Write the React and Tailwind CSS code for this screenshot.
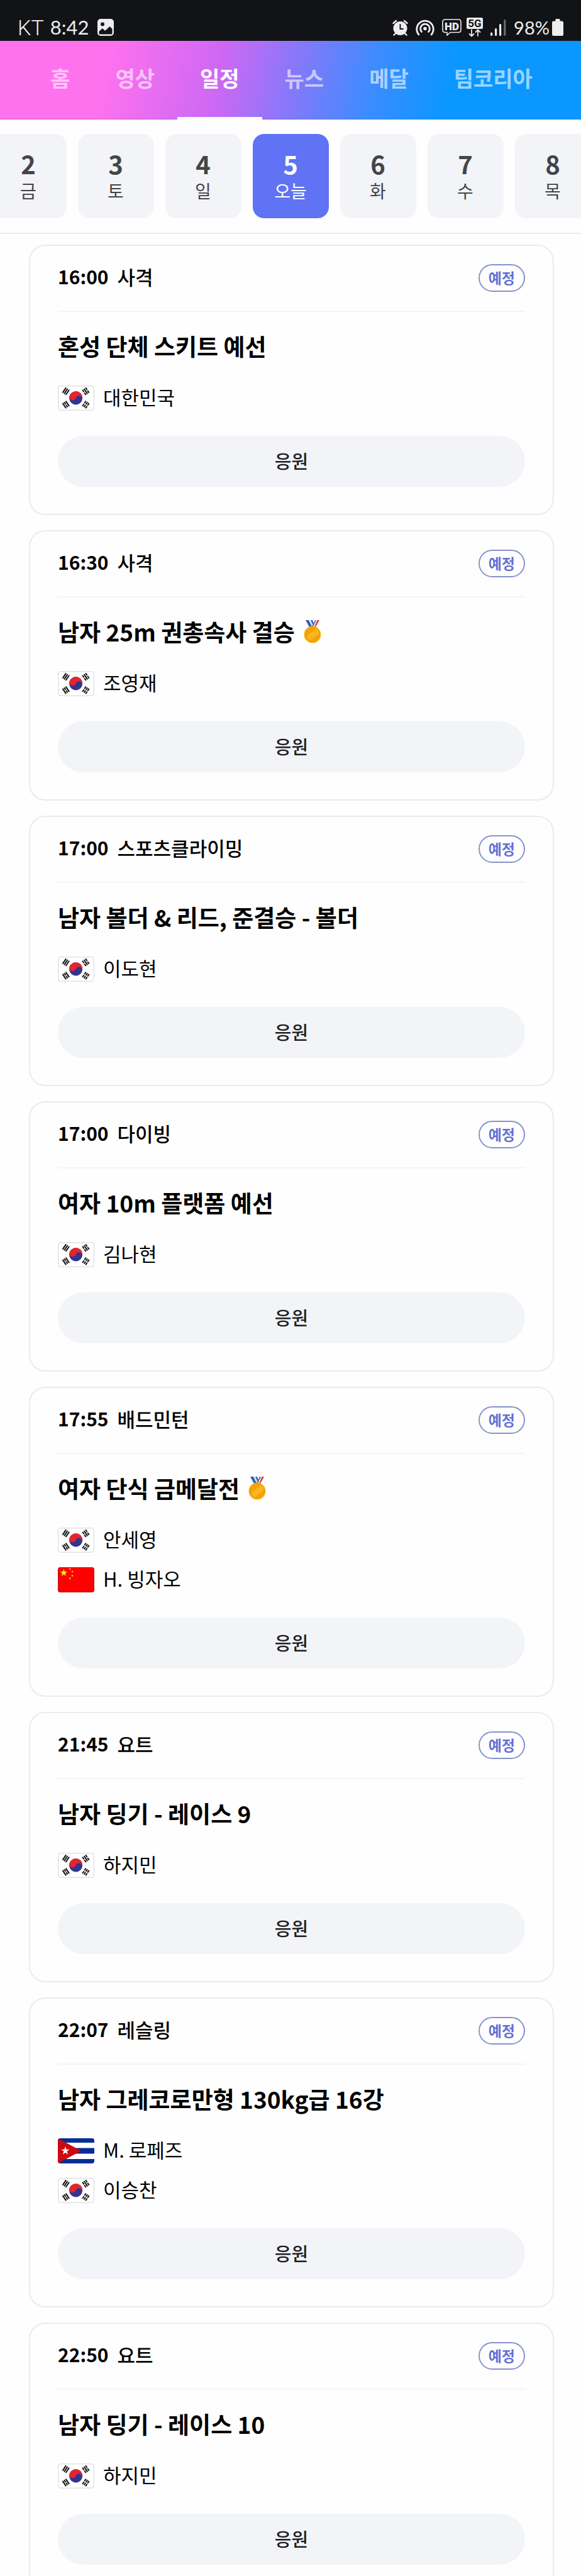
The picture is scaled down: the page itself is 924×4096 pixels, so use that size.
import { useState } from 'react'
import clsx from 'clsx'

const TABS = ['홈', '영상', '일정', '뉴스', '메달', '팀코리아']

const DAYS = [
  { date: 2, label: '금' },
  { date: 3, label: '토' },
  { date: 4, label: '일' },
  { date: 5, label: '오늘' },
  { date: 6, label: '화' },
  { date: 7, label: '수' },
  { date: 8, label: '목' },
]

const MATCHES = [
  { time: '16:00', sport: '사격', title: '혼성 단체 스키트 예선', players: [{ flag: 'kr', name: '대한민국' }] },
  { time: '16:30', sport: '사격', title: '남자 25m 권총속사 결승', medal: true, players: [{ flag: 'kr', name: '조영재' }] },
  { time: '17:00', sport: '스포츠클라이밍', title: '남자 볼더 & 리드, 준결승 - 볼더', players: [{ flag: 'kr', name: '이도현' }] },
  { time: '17:00', sport: '다이빙', title: '여자 10m 플랫폼 예선', players: [{ flag: 'kr', name: '김나현' }] },
  {
    time: '17:55',
    sport: '배드민턴',
    title: '여자 단식 금메달전',
    medal: true,
    players: [
      { flag: 'kr', name: '안세영' },
      { flag: 'cn', name: 'H. 빙자오' },
    ],
  },
  { time: '21:45', sport: '요트', title: '남자 딩기 - 레이스 9', players: [{ flag: 'kr', name: '하지민' }] },
  {
    time: '22:07',
    sport: '레슬링',
    title: '남자 그레코로만형 130kg급 16강',
    players: [
      { flag: 'cu', name: 'M. 로페즈' },
      { flag: 'kr', name: '이승찬' },
    ],
  },
  { time: '22:50', sport: '요트', title: '남자 딩기 - 레이스 10', players: [{ flag: 'kr', name: '하지민' }] },
]

const STAR = '0,-10 2.25,-3.09 9.51,-3.09 3.63,1.18 5.88,8.09 0,3.82 -5.88,8.09 -3.63,1.18 -9.51,-3.09 -2.25,-3.09'

function Trigram({ x, y, angle, broken }) {
  return (
    <g transform={`translate(${x} ${y}) rotate(${angle})`} fill="#111">
      {broken.map((isBroken, i) => {
        const top = -4 + i * 3
        return isBroken ? (
          <g key={i}>
            <rect x="-5" y={top} width="4.4" height="2" />
            <rect x="0.6" y={top} width="4.4" height="2" />
          </g>
        ) : (
          <rect key={i} x="-5" y={top} width="10" height="2" />
        )
      })}
    </g>
  )
}

function KoreaFlag() {
  return (
    <>
      <rect width="58" height="40" fill="#fff" />
      <g transform="translate(28.6 19.8) rotate(20)">
        <circle r="10.6" fill="#32348f" />
        <path d="M-10.6 0A10.6 10.6 0 0 1 10.6 0A5.3 5.3 0 0 0 0 0A5.3 5.3 0 0 1 -10.6 0Z" fill="#e4252f" />
      </g>
      <Trigram x={12.8} y={9.2} angle={-56} broken={[false, false, false]} />
      <Trigram x={44.4} y={9.2} angle={56} broken={[true, false, true]} />
      <Trigram x={12.8} y={30.4} angle={56} broken={[false, true, false]} />
      <Trigram x={44.4} y={30.4} angle={-56} broken={[true, true, true]} />
      <rect x="0.75" y="0.75" width="56.5" height="38.5" rx="3.5" fill="none" stroke="#e2e2e2" strokeWidth="1.5" />
    </>
  )
}

function ChinaFlag() {
  return (
    <>
      <rect width="58" height="40" fill="#fe0000" />
      <g fill="#ffec1f">
        <polygon points={STAR} transform="translate(9.4 9) scale(0.62)" />
        <polygon points={STAR} transform="translate(19.3 2.9) rotate(20) scale(0.2)" />
        <polygon points={STAR} transform="translate(23 7) rotate(-10) scale(0.2)" />
        <polygon points={STAR} transform="translate(23 13.4) scale(0.2)" />
        <polygon points={STAR} transform="translate(19.3 17.8) rotate(20) scale(0.2)" />
      </g>
      <rect x="0.5" y="0.5" width="57" height="39" rx="3.5" fill="none" stroke="#b3141a" />
    </>
  )
}

function CubaFlag() {
  return (
    <>
      <rect width="58" height="40" fill="#fff" />
      <path d="M0 0H58V7H0ZM0 15.5H58V24.5H0ZM0 33H58V40H0Z" fill="#052f94" />
      <path d="M0 0L37 20L0 40Z" fill="#cc0a12" />
      <polygon points={STAR} fill="#fff" transform="translate(12 20) scale(0.7)" />
    </>
  )
}

const FLAGS = {
  kr: { label: '대한민국 국기', Drawing: KoreaFlag },
  cn: { label: '중국 국기', Drawing: ChinaFlag },
  cu: { label: '쿠바 국기', Drawing: CubaFlag },
}

function Flag({ code }) {
  const { label, Drawing } = FLAGS[code]
  return (
    <svg viewBox="0 0 58 40" role="img" aria-label={label} className="h-10 w-[58px] shrink-0 rounded-sm">
      <Drawing />
    </svg>
  )
}

function Medal() {
  return (
    <svg viewBox="0 0 28 37" role="img" aria-label="금메달" className="h-[37px] w-7 shrink-0">
      <path d="M3 0H8L14 11H9Z" fill="#2f5fb5" />
      <path d="M8 0H11L15 8L13.5 11Z" fill="#dfe6f2" />
      <path d="M11 0H14L16 5L14.5 8Z" fill="#3a6cc2" />
      <path d="M18 0H20L15.5 11H13Z" fill="#3a6cc2" />
      <path d="M20 0H21.5L17 11H15Z" fill="#f3f3f3" />
      <path d="M21.5 0H25L19 11H17Z" fill="#dd3a3f" />
      <circle cx="14" cy="23" r="13.5" fill="#fbb40f" />
      <circle cx="14" cy="23" r="11.2" fill="#f3a408" stroke="#e39604" />
      <path d="M5 25L20 14Q24 17 24.6 21L10 33Q6 30 5 25Z" fill="#fcbd2c" opacity="0.7" />
      <rect x="12" y="8.5" width="4" height="2.5" rx="1" fill="#d99a1a" />
    </svg>
  )
}

function StatusBar() {
  return (
    <div className="flex h-[65px] items-center justify-between bg-[#121317] pt-[22px] pr-7 pl-7 text-[#eee]">
      <div className="flex items-center">
        <span className="font-['Roboto',sans-serif] text-[34px] leading-none font-light">KT</span>
        <span className="ml-2.5 font-['Lato',sans-serif] text-[31px] leading-none">8:42</span>
        <svg viewBox="0 0 26 27" className="ml-3.5 h-[27px] w-[26px]">
          <rect width="26" height="27" rx="5" fill="currentColor" />
          <circle cx="8" cy="8.5" r="3" fill="#121317" />
          <path d="M2.5 20L8 15L12 19L19.5 12L23.5 16V23Q23.5 24.5 22 24.5H4Q2.5 24.5 2.5 23Z" fill="#121317" />
        </svg>
      </div>
      <div className="flex items-center">
        <svg viewBox="0 0 25 26" className="h-[26px] w-[25px]" fill="none" stroke="currentColor" strokeLinecap="round">
          <circle cx="12.5" cy="14" r="11" fill="currentColor" stroke="none" />
          <path d="M1.5 6L6 2M23.5 6L19 2M5 22L2.5 24.7M20 22L22.5 24.7" strokeWidth="2.4" />
          <path d="M12.5 8V15H17" stroke="#121317" strokeWidth="2" />
        </svg>
        <svg viewBox="0 0 30 27" className="ml-3 h-[27px] w-[30px]" fill="none" stroke="currentColor" strokeLinecap="round" strokeWidth="2.8">
          <path d="M5 25A13.2 13.2 0 1 1 25 25" />
          <path d="M9.5 20.5A7.4 7.4 0 1 1 20.5 20.5" />
          <circle cx="15" cy="15.5" r="2.8" fill="currentColor" stroke="none" />
        </svg>
        <svg viewBox="0 0 31 27" className="ml-3 h-[27px] w-[31px]" fill="none" stroke="currentColor" strokeWidth="1.6">
          <path d="M5 1H26Q30 1 30 5V17.5Q30 21.5 26 21.5H13L8 26V21.5H5Q1 21.5 1 17.5V5Q1 1 5 1Z" />
          <text x="15.5" y="17.5" textAnchor="middle" fill="currentColor" stroke="none" className="font-['Roboto',sans-serif] text-[17px] font-black">HD</text>
        </svg>
        <svg viewBox="0 0 26 31" className="ml-2 h-[31px] w-[26px]" fill="none" stroke="currentColor" strokeLinecap="round" strokeLinejoin="round" strokeWidth="1.8">
          <rect width="26" height="18" rx="2.5" fill="currentColor" stroke="none" />
          <text x="13" y="15" textAnchor="middle" fill="#121317" stroke="none" className="font-['Roboto',sans-serif] text-[17px] font-bold">5G</text>
          <path d="M8 19.5V29.5M4.5 26L8 29.5L11.5 26M18 29V19.5M14.5 23L18 19.5L21.5 23" />
        </svg>
        <svg viewBox="0 0 25 26" className="ml-3 h-[26px] w-[25px]" fill="currentColor">
          <rect y="20.5" width="3.2" height="5.5" rx="1.5" />
          <rect x="7" y="14" width="3.2" height="12" rx="1.5" />
          <rect x="14" y="7" width="3.2" height="19" rx="1.5" />
          <rect x="21.2" width="3.2" height="26" rx="1.5" opacity="0.4" />
        </svg>
        <span className="ml-3 font-['Lato',sans-serif] text-[29px] leading-none">98%</span>
        <svg viewBox="0 0 18 27" className="ml-1 h-[27px] w-[18px]" fill="currentColor">
          <path d="M5.5 1Q5.5 0 6.5 0H11.5Q12.5 0 12.5 1V3.5H15.5Q18 3.5 18 6V24.5Q18 27 15.5 27H2.5Q0 27 0 24.5V6Q0 3.5 2.5 3.5H5.5Z" />
        </svg>
      </div>
    </div>
  )
}

function TabBar({ active, onChange }) {
  return (
    <nav className="flex h-[125px] justify-center bg-[linear-gradient(102deg,#ff72ee_18%,#cd68f4_38%,#7e7afa_52%,#3c8cff_64%,#0a97ff_77%)] pl-[3px] shadow-[inset_0_-1px_0_rgba(90,100,130,0.5)]">
      {TABS.map((tab) => (
        <button
          key={tab}
          type="button"
          onClick={() => onChange(tab)}
          className={clsx(
            'cursor-pointer border-b-4 px-9 pb-1 text-[34px] leading-none font-bold whitespace-nowrap',
            tab === active ? 'border-white text-white' : 'border-transparent text-white/60'
          )}
        >
          {tab}
        </button>
      ))}
    </nav>
  )
}

function DayPicker({ selected, onSelect }) {
  return (
    <div className="flex justify-center gap-[18px] overflow-hidden border-b-2 border-[#ebebeb] py-[23px]">
      {DAYS.map(({ date, label }) => (
        <button
          key={date}
          type="button"
          onClick={() => onSelect(date)}
          className={clsx(
            'flex h-[134px] w-[121px] shrink-0 cursor-pointer flex-col items-center justify-center rounded-[18px] pb-1',
            date === selected ? 'bg-[#5f73f4] text-white' : 'bg-[#f2f4f8] text-[#444548]'
          )}
        >
          <span className="text-[40px] leading-[50px] font-bold">{date}</span>
          <span className="text-[28px] leading-9">{label}</span>
        </button>
      ))}
    </div>
  )
}

function MatchCard({ match }) {
  return (
    <article className="rounded-[26px] border-2 border-[#ebebeb] px-11 pt-[29px] pb-[43px]">
      <div className="flex items-center justify-between border-b-2 border-[#f4f4f5] pb-[30px]">
        <div className="flex h-11 items-center gap-3.5 pb-1.5 leading-none">
          <time className="text-[30px] font-bold">{match.time}</time>
          <span className="text-[31px] font-medium">{match.sport}</span>
        </div>
        <span className="flex h-11 items-center rounded-full border-2 border-[#8791cb] px-3.5 pb-0.5 text-[23px] leading-none font-bold text-[#6470d6]">
          예정
        </span>
      </div>
      <div className="mt-[27px] flex items-center gap-3.5">
        <h2 className="text-[37px] leading-[54px] font-bold">{match.title}</h2>
        {match.medal && <Medal />}
      </div>
      <ul className="mt-9 flex flex-col gap-[23px]">
        {match.players.map((player) => (
          <li key={player.name} className="flex h-10 items-center gap-3.5">
            <Flag code={player.flag} />
            <span className="pb-1.5 text-[31px] leading-none">{player.name}</span>
          </li>
        ))}
      </ul>
      <button type="button" className="mt-10 h-[81px] w-full cursor-pointer rounded-full bg-[#f2f4f8] pb-0.5 text-[29px] leading-none font-medium text-[#1e1f22]">
        응원
      </button>
    </article>
  )
}

export default function App() {
  const [tab, setTab] = useState('일정')
  const [day, setDay] = useState(5)

  return (
    <div className="h-screen overflow-hidden bg-[#fefefe] font-['Noto_Sans_CJK_KR',sans-serif] text-black">
      <StatusBar />
      <TabBar active={tab} onChange={setTab} />
      <DayPicker selected={day} onSelect={setDay} />
      <main className="flex flex-col gap-6 pt-[17px] pr-[43px] pl-[46px]">
        {MATCHES.map((match) => (
          <MatchCard key={match.time + match.title} match={match} />
        ))}
      </main>
    </div>
  )
}
